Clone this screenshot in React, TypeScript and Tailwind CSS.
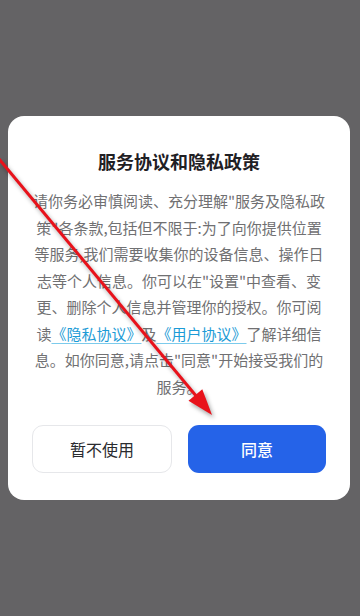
// 服务协议和隐私政策弹窗 — 首次启动时的授权确认

const FONT = { fontFamily: '"Noto Sans CJK SC", "Noto Sans", sans-serif' }

function Arrow() {
  // 标注用的红色箭头，覆盖在弹窗之上
  return (
    <svg
      className="absolute inset-0 pointer-events-none drop-shadow-[2px_3px_2px_rgba(0,0,0,0.35)]"
      width="360"
      height="616"
      viewBox="0 0 360 616"
    >
      <line x1="-20" y1="136" x2="197" y2="397" stroke="#e8121b" strokeWidth="3" />
      <polygon points="212,415 188.5,400.8 202.3,389.2" fill="#e8121b" />
    </svg>
  )
}

export default function App() {
  return (
    <div className="relative w-[360px] h-[616px] bg-[#646365] flex items-center pl-2 overflow-hidden" style={FONT}>
      <div className="w-[342px] bg-white rounded-[16px] pt-8 pb-[27px] px-6">
        <h2 className="text-center text-[18px] leading-[26px] font-semibold text-[#1f2024]">服务协议和隐私政策</h2>
        <p className="mt-[14px] text-center text-[15px] leading-[26.5px] text-[#707072]">
          请你务必审慎阅读、充分理解"服务及隐私政策"各条款,包括但不限于:为了向你提供位置等服务,我们需要收集你的设备信息、操作日志等个人信息。你可以在"设置"中查看、变更、删除个人信息并管理你的授权。你可阅读
          <span className="text-[#1c9bd6] underline decoration-[#7ccbec] underline-offset-[3px]">《隐私协议》</span>
          及
          <span className="text-[#1c9bd6] underline decoration-[#7ccbec] underline-offset-[3px]">《用户协议》</span>
          了解详细信息。如你同意,请点击"同意"开始接受我们的服务。
        </p>
        <div className="mt-[25px] flex gap-4">
          <button
            type="button"
            className="flex-1 h-12 rounded-[11px] border border-[#e6e7ea] bg-white text-[16px] text-[#2a2b2f]"
          >
            暂不使用
          </button>
          <button
            type="button"
            className="flex-1 h-12 rounded-[11px] bg-[#2563e8] text-[16px] text-white font-medium"
          >
            同意
          </button>
        </div>
      </div>
      <Arrow />
    </div>
  )
}
